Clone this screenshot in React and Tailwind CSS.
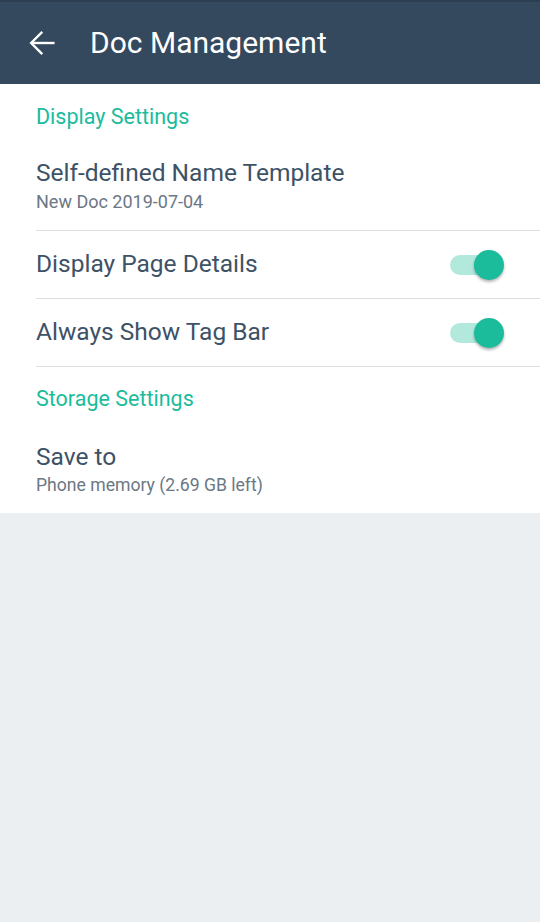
export default function App() {
  const font = { fontFamily: 'Roboto, "Noto Sans", sans-serif' };

  const Toggle = () => (
    <div className="relative w-[58px] h-[32px] flex items-center">
      <div className="absolute left-[2px] w-[46px] h-[20px] rounded-full bg-[#b3e9dc]"></div>
      <div className="absolute right-[2px] w-[30px] h-[30px] rounded-full bg-[#1abc9c] shadow-[0_2px_3px_rgba(0,0,0,0.3)]"></div>
    </div>
  );

  return (
    <div className="w-[540px] h-[922px] bg-[#eceff1] flex flex-col" style={font}>
      {/* Toolbar */}
      <div className="h-[84px] bg-[#34495e] border-t-2 border-[#2c3e50] flex items-center">
        <svg className="ml-[29px]" width="26" height="26" viewBox="0 0 24 24" fill="none" stroke="white" strokeWidth="2.2" strokeLinecap="square">
          <path d="M22.5 12H3" />
          <path d="M11.5 2.5L2 12l9.5 9.5" />
        </svg>
        <h1 className="ml-[35px] text-[30px] text-white leading-none">Doc Management</h1>
      </div>

      {/* Settings list */}
      <div className="bg-white pl-[36px]">
        <div className="h-[66px] flex items-center text-[21.5px] text-[#1abc9c]">Display Settings</div>

        <div className="h-[81px] flex flex-col justify-start pt-[8px] border-b border-[#dedede]">
          <div className="text-[24.5px] text-[#3d5266] leading-[30px]">Self-defined Name Template</div>
          <div className="text-[18px] text-[#6b7785] leading-[24px] mt-[2px]">New Doc 2019-07-04</div>
        </div>

        <div className="h-[68px] flex items-center justify-between pr-[34px] border-b border-[#dedede]">
          <div className="text-[24.5px] text-[#3d5266]">Display Page Details</div>
          <Toggle />
        </div>

        <div className="h-[68px] flex items-center justify-between pr-[34px] border-b border-[#dedede]">
          <div className="text-[24.5px] text-[#3d5266]">Always Show Tag Bar</div>
          <Toggle />
        </div>

        <div className="h-[65px] flex items-center text-[21.5px] text-[#1abc9c]">Storage Settings</div>

        <div className="h-[81px] flex flex-col pt-[10px]">
          <div className="text-[24.5px] text-[#3d5266] leading-[30px]">Save to</div>
          <div className="text-[17.6px] text-[#6b7785] leading-[24px] mt-[1px]">Phone memory (2.69 GB left)</div>
        </div>
      </div>
    </div>
  );
}
